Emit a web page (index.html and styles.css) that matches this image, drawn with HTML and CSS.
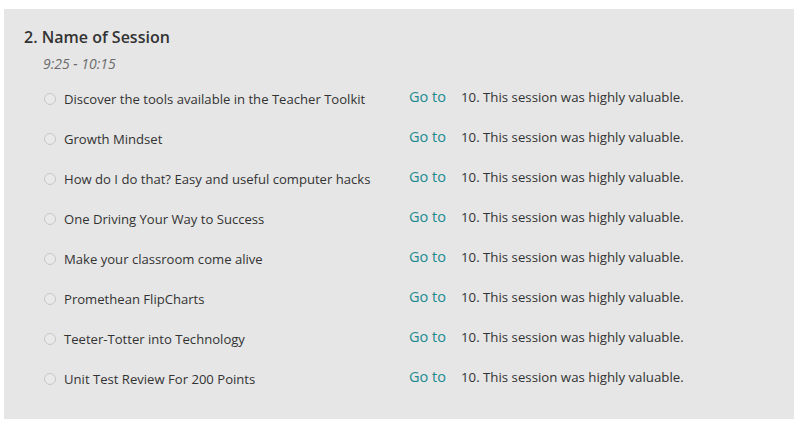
FILE: index.html
```html
<!DOCTYPE html>
<html>
<head>
<meta charset="utf-8">
<link rel="stylesheet" href="styles.css">
</head>
<body>
<div class="panel">
  <h2 class="title">2. Name of Session</h2>
  <div class="time">9:25 - 10:15</div>
  <div class="rows">
    <div class="row"><span class="opt"><span class="radio"></span>Discover the tools available in the Teacher Toolkit</span><span class="goto">Go to</span><span class="dest">10. This session was highly valuable.</span></div>
    <div class="row"><span class="opt"><span class="radio"></span>Growth Mindset</span><span class="goto">Go to</span><span class="dest">10. This session was highly valuable.</span></div>
    <div class="row"><span class="opt"><span class="radio"></span>How do I do that? Easy and useful computer hacks</span><span class="goto">Go to</span><span class="dest">10. This session was highly valuable.</span></div>
    <div class="row"><span class="opt"><span class="radio"></span>One Driving Your Way to Success</span><span class="goto">Go to</span><span class="dest">10. This session was highly valuable.</span></div>
    <div class="row"><span class="opt"><span class="radio"></span>Make your classroom come alive</span><span class="goto">Go to</span><span class="dest">10. This session was highly valuable.</span></div>
    <div class="row"><span class="opt"><span class="radio"></span>Promethean FlipCharts</span><span class="goto">Go to</span><span class="dest">10. This session was highly valuable.</span></div>
    <div class="row"><span class="opt"><span class="radio"></span>Teeter-Totter into Technology</span><span class="goto">Go to</span><span class="dest">10. This session was highly valuable.</span></div>
    <div class="row"><span class="opt"><span class="radio"></span>Unit Test Review For 200 Points</span><span class="goto">Go to</span><span class="dest">10. This session was highly valuable.</span></div>
  </div>
</div>
</body>
</html>
```
FILE: styles.css
```css
html, body {
  margin: 0;
  padding: 0;
  background: #ffffff;
}
body {
  font-family: "Open Sans", "Noto Sans", "Liberation Sans", sans-serif;
  color: #333333;
}
.panel {
  margin: 9px 0 0 4px;
  width: 790px;
  height: 410px;
  box-sizing: border-box;
  background: #e6e6e6;
  padding: 16px 0 0 20px;
}
.title {
  margin: 0;
  font-size: 16px;
  font-weight: 600;
  line-height: 24px;
  color: #333333;
}
.time {
  margin: 6px 0 0 19px;
  font-size: 14px;
  font-style: italic;
  line-height: 18px;
  color: #6b6b6b;
}
.rows {
  margin: 6px 0 0 20px;
}
.row {
  display: grid;
  grid-template-columns: 365px 52px auto;
  align-items: center;
  height: 40px;
}
.opt {
  display: flex;
  align-items: center;
  gap: 8px;
  font-size: 13.1px;
  color: #333333;
}
.radio {
  width: 10px;
  height: 10px;
  border-radius: 50%;
  border: 1px solid #c8c8c8;
  background: #e9e9e9;
  flex: none;
}
.goto {
  font-size: 14.5px;
  color: #1a8a8f;
  margin-top: -5px;
}
.dest {
  font-size: 13.25px;
  color: #333333;
  margin-top: -5px;
}
```
